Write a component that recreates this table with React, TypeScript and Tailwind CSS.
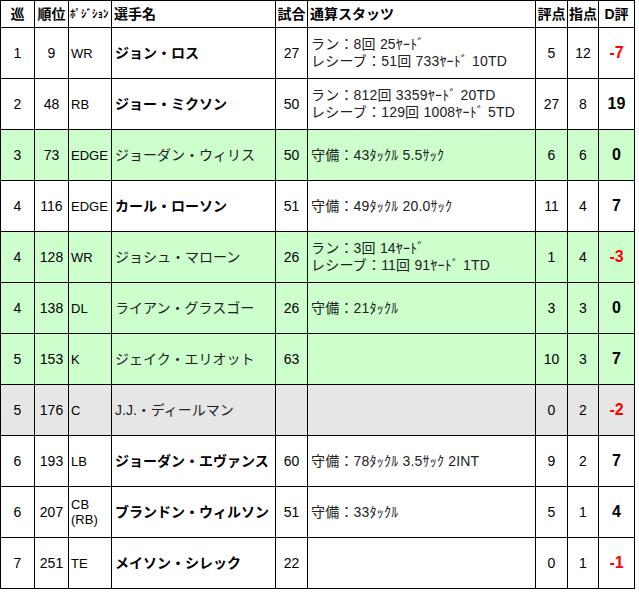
import React from 'react';

type Row = {
  round: number;
  pick: number;
  pos: string[];
  name: string;
  bold: boolean;
  games: number | '';
  stats: string[];
  score: number;
  points: number;
  diff: number;
  bg: 'white' | 'green' | 'grey';
};

const ROWS: Row[] = [
  { round: 1, pick: 9, pos: ['WR'], name: 'ジョン・ロス', bold: true, games: 27, stats: ['ラン：8回 25ﾔｰﾄﾞ', 'レシーブ：51回 733ﾔｰﾄﾞ 10TD'], score: 5, points: 12, diff: -7, bg: 'white' },
  { round: 2, pick: 48, pos: ['RB'], name: 'ジョー・ミクソン', bold: true, games: 50, stats: ['ラン：812回 3359ﾔｰﾄﾞ 20TD', 'レシーブ：129回 1008ﾔｰﾄﾞ 5TD'], score: 27, points: 8, diff: 19, bg: 'white' },
  { round: 3, pick: 73, pos: ['EDGE'], name: 'ジョーダン・ウィリス', bold: false, games: 50, stats: ['守備：43ﾀｯｸﾙ 5.5ｻｯｸ'], score: 6, points: 6, diff: 0, bg: 'green' },
  { round: 4, pick: 116, pos: ['EDGE'], name: 'カール・ローソン', bold: true, games: 51, stats: ['守備：49ﾀｯｸﾙ 20.0ｻｯｸ'], score: 11, points: 4, diff: 7, bg: 'white' },
  { round: 4, pick: 128, pos: ['WR'], name: 'ジョシュ・マローン', bold: false, games: 26, stats: ['ラン：3回 14ﾔｰﾄﾞ', 'レシーブ：11回 91ﾔｰﾄﾞ 1TD'], score: 1, points: 4, diff: -3, bg: 'green' },
  { round: 4, pick: 138, pos: ['DL'], name: 'ライアン・グラスゴー', bold: false, games: 26, stats: ['守備：21ﾀｯｸﾙ'], score: 3, points: 3, diff: 0, bg: 'green' },
  { round: 5, pick: 153, pos: ['K'], name: 'ジェイク・エリオット', bold: false, games: 63, stats: [], score: 10, points: 3, diff: 7, bg: 'green' },
  { round: 5, pick: 176, pos: ['C'], name: 'J.J.・ディールマン', bold: false, games: '', stats: [], score: 0, points: 2, diff: -2, bg: 'grey' },
  { round: 6, pick: 193, pos: ['LB'], name: 'ジョーダン・エヴァンス', bold: true, games: 60, stats: ['守備：78ﾀｯｸﾙ 3.5ｻｯｸ 2INT'], score: 9, points: 2, diff: 7, bg: 'white' },
  { round: 6, pick: 207, pos: ['CB', '(RB)'], name: 'ブランドン・ウィルソン', bold: true, games: 51, stats: ['守備：33ﾀｯｸﾙ'], score: 5, points: 1, diff: 4, bg: 'white' },
  { round: 7, pick: 251, pos: ['TE'], name: 'メイソン・シレック', bold: true, games: 22, stats: [], score: 0, points: 1, diff: -1, bg: 'white' },
];

const BG = {
  white: 'bg-white',
  green: 'bg-[#ccffcc]',
  grey: 'bg-[#e7e6e6]',
};

const cell = 'border border-black p-0 align-middle';

export default function App() {
  return (
    <div className="w-[639px] h-[597px] bg-white text-black text-[14px] font-['Liberation_Sans','Noto_Sans_CJK_JP',sans-serif]">
      <table className="table-fixed border-collapse w-[634px]">
        <colgroup>
          <col className="w-[34px]" />
          <col className="w-[34px]" />
          <col className="w-[43px]" />
          <col className="w-[164px]" />
          <col className="w-[32px]" />
          <col className="w-[228px]" />
          <col className="w-[32px]" />
          <col className="w-[31px]" />
          <col className="w-[36px]" />
        </colgroup>
        <thead>
          <tr className="h-[27px] font-bold leading-none">
            <th className={`${cell} text-center`}>巡</th>
            <th className={`${cell} text-center`}>順位</th>
            <th className={`${cell} text-left pl-px overflow-hidden whitespace-nowrap text-[11px] font-bold`}>ﾎﾟｼﾞｼｮﾝ</th>
            <th className={`${cell} text-left pl-[2px]`}>選手名</th>
            <th className={`${cell} text-center`}>試合</th>
            <th className={`${cell} text-left pl-[2px]`}>通算スタッツ</th>
            <th className={`${cell} text-center`}>評点</th>
            <th className={`${cell} text-center`}>指点</th>
            <th className={`${cell} text-center`}>D評</th>
          </tr>
        </thead>
        <tbody>
          {ROWS.map((r, i) => (
            <tr key={i} className={`h-[51px] ${BG[r.bg]}`}>
              <td className={`${cell} text-center`}>{r.round}</td>
              <td className={`${cell} text-center`}>{r.pick}</td>
              <td className={`${cell} pl-[2px] text-[13px] leading-[15px] whitespace-nowrap`}>
                {r.pos.map((p) => (
                  <div key={p}>{p}</div>
                ))}
              </td>
              <td className={`${cell} pl-[3px] whitespace-nowrap ${r.bold ? 'font-bold' : 'font-normal text-[#222]'}`}>
                {r.name}
              </td>
              <td className={`${cell} text-center`}>{r.games}</td>
              <td className={`${cell} pl-[3px] leading-[17px] whitespace-nowrap text-[#222] tracking-[0.2px]`}>
                {r.stats.map((s) => (
                  <div key={s}>{s}</div>
                ))}
              </td>
              <td className={`${cell} text-center`}>{r.score}</td>
              <td className={`${cell} text-center`}>{r.points}</td>
              <td className={`${cell} text-center font-bold text-[16px] ${r.diff < 0 ? 'text-[#ff0000]' : 'text-black'}`}>
                {r.diff}
              </td>
            </tr>
          ))}
        </tbody>
      </table>
    </div>
  );
}
